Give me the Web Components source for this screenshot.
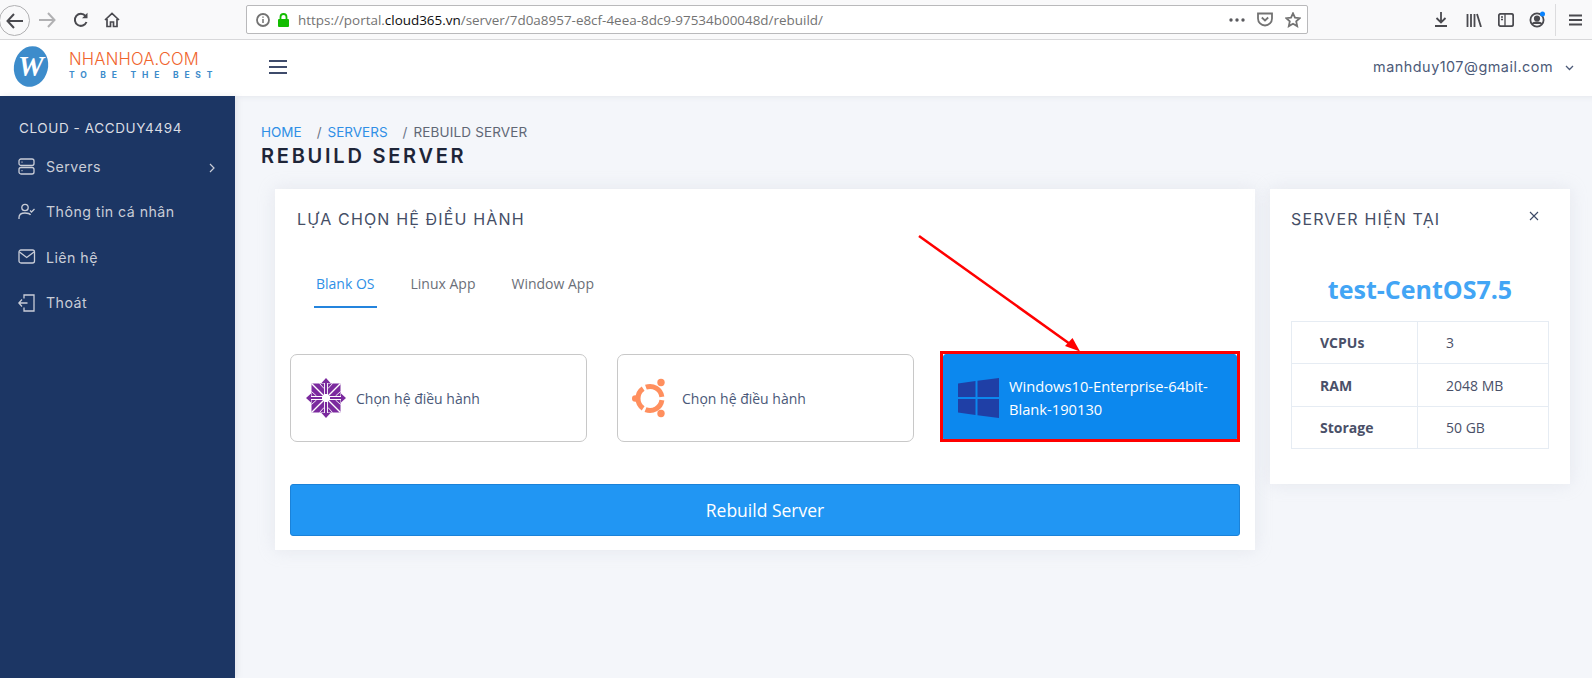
<!DOCTYPE html>
<html>
<head>
<meta charset="utf-8">
<title>Rebuild Server</title>
<style>
    html, body { margin: 0; height: 100%; }
    body { width: 1592px; height: 678px; overflow: hidden; font-family: "Open Sans", sans-serif; position: relative; }
    app-shell { height: 100%; }
</style>
</head>
<body>
<app-shell>
    <browser-bar slot="browser"></browser-bar>
    <app-header slot="header"></app-header>
    <side-nav slot="side" title="CLOUD - ACCDUY4494">
        <nav-item icon="server" arrow>Servers</nav-item>
        <nav-item icon="user">Thông tin cá nhân</nav-item>
        <nav-item icon="mail">Liên hệ</nav-item>
        <nav-item icon="exit">Thoát</nav-item>
    </side-nav>
    <page-head slot="main"></page-head>
    <div slot="main" style="display:flex;gap:15px;padding:0 22px 0 40px;align-items:flex-start">
        <os-panel></os-panel>
        <server-info name="test-CentOS7.5"></server-info>
    </div>
</app-shell>
<note-arrow></note-arrow>

<script>
(function () {

    const SANS = '"Open Sans", sans-serif';
    const HEAD = 'Inter, "Liberation Sans", sans-serif';

    function define(name, html, extra) {
        const template = document.createElement('template');
        template.innerHTML = html;
        class El extends HTMLElement {
            constructor() {
                super();
                this.attachShadow({ mode: 'open' });
                this.shadowRoot.appendChild(template.content.cloneNode(true));
            }
            connectedCallback() {
                if (extra) extra.call(this);
            }
        }
        window.customElements.define(name, El);
    }

    define('app-shell', `
        <style>
            :host { display: grid; grid-template-columns: 235px 1fr; grid-template-rows: 40px 56px 1fr; background: #f4f6fa; }
            .top { grid-column: 1 / 3; }
            .main { min-width: 0; box-shadow: inset 0 6px 6px -6px #dfe2e8; }
        </style>
        <div class="top"><slot name="browser"></slot></div>
        <div class="top"><slot name="header"></slot></div>
        <slot name="side"></slot>
        <div class="main"><slot name="main"></slot></div>`);

    define('browser-bar', `
        <style>
            :host { display: flex; align-items: center; height: 39px; background: #f9f9fa; border-bottom: 1px solid #d8d8da; color: #4a4a4f; }
            svg { display: block; fill: none; stroke: currentColor; stroke-width: 1.8; }
            .back { width: 31px; height: 31px; margin: 2px 0 0 -1px; border: 1px solid #b1b1b3; border-radius: 50%; display: flex; align-items: center; justify-content: center; flex: none; box-sizing: border-box; }
            .btn { margin-top: 1px; flex: none; }
            .url { width: 1062px; height: 29px; margin: 0 0 0 126px; box-sizing: border-box; background: #fff; border: 1px solid #b9b9bb; border-radius: 2px; display: flex; align-items: center; padding: 0 6px 0 9px; font: 13.45px ${SANS}; color: #737373; white-space: nowrap; flex: none; }
            .url b { font-weight: 400; color: #0c0c0d; }
            .url span.t { margin-left: 8px; }
            .fill { flex: 1; }
            .right { display: flex; align-items: center; margin-left: auto; }
            .sep { width: 1px; height: 32px; background: #dcdcde; margin: 0 13px 0 9px; }
            .dots circle { fill: #5a5a5e; stroke: none; }
        </style>
        <div class="back"><svg width="18" height="16" viewBox="0 0 18 16"><path d="M8 1 1.5 8 8 15M2 8h15" stroke-width="2"/></svg></div>
        <svg class="btn" style="margin-left:8px;color:#b1b1b3" width="18" height="16" viewBox="0 0 18 16"><path d="M10 1l6.5 7-6.5 7M16 8H1" stroke-width="2"/></svg>
        <svg class="btn" style="margin-left:17px" width="16" height="16" viewBox="0 0 16 16"><path d="M13.5 10a6 6 0 1 1-1-6" stroke-width="2"/><path d="M14.5 .8v5.4H9z" fill="currentColor" stroke="none"/></svg>
        <svg class="btn" style="margin-left:15px" width="16" height="16" viewBox="0 0 16 16"><path d="M1 8 8 1.5 15 8M3 7v7.5h3.5V10h3v4.5H13V7" stroke-width="1.7"/></svg>
        <div class="url">
            <svg width="14" height="14" viewBox="0 0 14 14" stroke-width="1.2"><circle cx="7" cy="7" r="6"/><path d="M7 6v4M7 3.5v1.3" stroke-width="1.5"/></svg>
            <svg style="margin-left:7px" width="13" height="14" viewBox="0 0 13 14"><path d="M3.5 6V4a3 3 0 0 1 6 0v2" stroke="#12bc00" stroke-width="1.8"/><rect x="1" y="6" width="11" height="8" rx="1" fill="#12bc00" stroke="none"/></svg>
            <span class="t">https://portal.<b>cloud365.vn</b>/server/7d0a8957-e8cf-4eea-8dc9-97534b00048d/rebuild/</span>
            <span class="fill"></span>
            <svg class="dots" width="16" height="4" viewBox="0 0 16 4"><circle cx="2" cy="2" r="1.7"/><circle cx="8" cy="2" r="1.7"/><circle cx="14" cy="2" r="1.7"/></svg>
            <svg style="margin-left:12px" width="16" height="15" viewBox="0 0 16 15" stroke-width="1.6"><path d="M1 1.5h14v5a7 7 0 0 1-14 0zM4.8 5.5 8 8.5l3.2-3"/></svg>
            <svg style="margin-left:12px" width="16" height="16" viewBox="0 0 16 16" stroke-width="1.6"><path d="M8 1.3l2 4.4 4.7.5-3.5 3.2 1 4.7L8 11.7l-4.2 2.4 1-4.7L1.3 6.2 6 5.7z"/></svg>
        </div>
        <div class="right">
            <svg width="14" height="15" viewBox="0 0 14 15"><path d="M7 0v10M2.500 6 7 10.500 11.500 6M1 14h12" stroke-width="1.8"/></svg>
            <svg style="margin-left:18px" width="16" height="14" viewBox="0 0 16 14" stroke-width="1.6"><path d="M1.500 1v13M5 1v13M8.500 1v13M11 1l4 13"/></svg>
            <svg style="margin-left:16px" width="16" height="14" viewBox="0 0 16 14" stroke-width="1.6"><rect x=".8" y=".8" width="14.4" height="12.4" rx="2"/><path d="M7 1v12M3 4h2M3 6.500h2" stroke-width="1.3"/></svg>
            <svg style="margin-left:15px" width="17" height="17" viewBox="0 0 17 17" stroke-width="1.4"><circle cx="8" cy="9" r="6.600"/><circle cx="8" cy="7.500" r="2.200" fill="currentColor"/><path d="M3.500 13c1-2.300 8-2.300 9 0" fill="currentColor"/><circle cx="13.500" cy="3" r="2.500" fill="#0a84ff" stroke="none"/></svg>
            <span class="sep"></span>
            <svg style="margin-right:10px" width="13" height="12" viewBox="0 0 13 12" stroke-width="1.8"><path d="M0 1.500h13M0 6h13M0 10.500h13"/></svg>
        </div>`);

    define('app-header', `
        <style>
            :host { display: flex; align-items: center; height: 56px; box-sizing: border-box; padding-bottom: 2px; background: #fff; color: #3e4b6b; }
            .ball { width: 34px; height: 41px; margin: -2px 0 0 14px; border-radius: 50%; background: #3d8ccb; color: #fff; display: flex; align-items: center; justify-content: center; font: italic 700 29px "Liberation Serif", serif; flex: none; transform: rotate(14deg); }
            .ball span { transform: rotate(-14deg); }
            .brand { margin: -3px 0 0 21px; width: 145px; flex: none; }
            .name { font: 300 16.6px/17px ${HEAD}; color: #f0642d; white-space: nowrap; letter-spacing: .2px; }
            .slogan { font: 700 8.5px/10px ${HEAD}; color: #3d8ccb; letter-spacing: 5.8px; white-space: nowrap; margin-top: 2px; }
            .burger { width: 18px; margin-left: 55px; border-top: 2px solid #3e4b6b; border-bottom: 2px solid #3e4b6b; height: 10px; }
            .burger::after { content: ""; display: block; height: 2px; margin-top: 4px; background: #3e4b6b; }
            .user { margin: -1px 0 0 auto; font: 400 14.4px ${HEAD}; color: #4c5a78; letter-spacing: .5px; }
            svg { margin: 2px 18px 0 12px; }
        </style>
        <div class="ball"><span>W</span></div>
        <div class="brand"><div class="name">NHANHOA.COM</div><div class="slogan">TO BE THE BEST</div></div>
        <div class="burger"></div>
        <span class="user">manhduy107@gmail.com</span>
        <svg width="9" height="6" viewBox="0 0 9 6" fill="none" stroke="#4c5a78" stroke-width="1.3"><path d="M1 1l3.5 3.500L8 1"/></svg>`);

    define('side-nav', `
        <style>
            :host { display: block; background: #1c3664; color: #cfd3dc; min-height: 100%; box-shadow: 2px 0 6px rgba(120,130,150,.15); }
            .t { padding: 24px 0 0 19px; height: 24px; font: 400 13.5px/17px ${HEAD}; letter-spacing: .6px; color: #dadde3; white-space: nowrap; }
        </style>
        <div class="t"></div>
        <div><slot></slot></div>`, function () {
            this.shadowRoot.querySelector('.t').textContent = this.getAttribute('title');
        });

    const NAV_ICONS = {
        server: '<rect x="1" y="1" width="15" height="6.500" rx="2"/><rect x="1" y="9.500" width="15" height="6.500" rx="2"/><path d="M3.500 4.200h1M3.500 12.700h1"/>',
        user: '<circle cx="7" cy="4.500" r="3.200"/><path d="M1 16v-1.500C1 11.500 3.500 10 7 10s5 1 5.500 2M12 7.500l1.500 1.500 3-3"/>',
        mail: '<rect x="1" y="2" width="15.500" height="13" rx="2"/><path d="M1.500 4 8.700 9.500 16 4"/>',
        exit: '<path d="M6 4.500V1h10v16H6v-3.500M9.500 9H.8M4 5.500.8 9 4 12.500"/>'
    };

    define('nav-item', `
        <style>
            :host { display: flex; align-items: center; height: 45.3px; padding-left: 18px; font: 400 14.2px ${HEAD}; color: #c9cdd7; letter-spacing: .45px; position: relative; }
            .ic { width: 18px; height: 18px; fill: none; stroke: currentColor; stroke-width: 1.3; flex: none; margin-right: 10px; }
            .chev { position: absolute; right: 20px; top: 50%; margin-top: -4px; }
        </style>
        <svg class="ic" viewBox="0 0 18 18"></svg>
        <slot></slot>`, function () {
            this.shadowRoot.querySelector('.ic').innerHTML = NAV_ICONS[this.getAttribute('icon')];
            if (this.hasAttribute('arrow')) {
                const s = document.createElement('span');
                s.className = 'chev';
                s.innerHTML = '<svg width="6" height="10" viewBox="0 0 6 10" fill="none" stroke="#c9cdd7" stroke-width="1.2" style="display:block"><path d="M1 1l4 4-4 4"/></svg>';
                this.shadowRoot.appendChild(s);
            }
        });

    define('page-head', `
        <style>
            :host { display: block; padding: 28px 0 0 26px; height: 93px; box-sizing: border-box; }
            .crumbs { font: 400 13.5px/16px ${HEAD}; color: #2f8fe6; display: flex; white-space: nowrap; }
            .crumbs i { font-style: normal; color: #6a7285; margin: 0 6px 0 15px; }
            .crumbs .now { color: #5f6675; letter-spacing: .15px; }
            h1 { margin: 4px 0 0; font: 600 20px/24px ${HEAD}; letter-spacing: 2.75px; color: #1e2538; }
        </style>
        <div class="crumbs"><span>HOME</span><i>/</i><span>SERVERS</span><i>/</i><span class="now">REBUILD SERVER</span></div>
        <h1>REBUILD SERVER</h1>`);

    define('os-tabs', `
        <style>
            :host { display: flex; padding-left: 24px; font: 400 14px ${SANS}; color: #6b6f78; }
            span { display: block; padding: 0 2px; height: 45px; line-height: 42px; margin-right: 32px; box-sizing: border-box; }
            .on { color: #2f8fe6; border-bottom: 2px solid #2484dd; }
        </style>
        <span class="on">Blank OS</span><span>Linux App</span><span>Window App</span>`);

    const OS_ICONS = {
        centos: `<svg viewBox="-20 -20 40 40" width="40" height="40">
            <rect x="-14.500" y="-14.500" width="29" height="29" fill="#7b2a9e"/>
            <g stroke="#fff" fill="none"><path d="M-14.500-14.500 14.500 14.500M14.500-14.500-14.500 14.500" stroke-width="1.400"/><path d="M0-15V15M-15 0H15" stroke-width="4"/><path d="M-6.500-14.500-2-9.500M6.500-14.500 2-9.500M-6.500 14.500-2 9.500M6.500 14.500 2 9.500M-14.500-6.500-9.500-2M14.500-6.500 9.500-2M-14.500 6.500-9.500 2M14.500 6.500 9.500 2" stroke-width=".9"/></g>
            <circle r="3.500" fill="#fff"/>
            <g fill="#7b2a9e"><path d="M0-20l4.500 5H1.100V-4H-1.100V-15H-4.500zM0 20l4.500-5H1.100V4H-1.100V15H-4.500zM-20 0l5-4.500V-1.100H-4V1.100H-15V4.500zM20 0l-5-4.500V-1.100H4V1.100H15V4.500z"/></g></svg>`,
        ubuntu: `<svg viewBox="0 0 38 40" width="38" height="40" style="margin:0 2px 0 -1px"><g fill="none" stroke="#ff8f5e" stroke-width="5"><path d="M13.900 9.220A12 12 0 0 1 29.880 18.830"/><path d="M29.880 22.170A12 12 0 0 1 13.500 31.630"/><path d="M11.120 30.330A12 12 0 0 1 11.120 10.670"/></g><g fill="#ff8f5e"><circle cx="29" cy="4.500" r="3.700"/><circle cx="3.300" cy="20.500" r="3.300"/><circle cx="29" cy="35.500" r="3.700"/></g></svg>`,
        windows: `<svg viewBox="0 0 41 40" width="41" height="40" fill="#1f3fa6"><path d="M0 5.500 17.500 3v16H0zM19.500 2.700 41 0v19H19.500zM0 21h17.500v16L0 34.500zM19.500 21H41v19l-21.500-2.700z"/></svg>`
    };

    define('os-card', `
        <style>
            :host { display: flex; align-items: center; box-sizing: border-box; width: 297px; height: 88px; border: 1px solid #c8c8c8; border-radius: 7px; padding: 0 0 0 15px; background: #fff; color: #4a5878; font: 400 14px/22px ${SANS}; flex: none; }
            :host([active]) { background: #0c88ee; color: #fff; border-color: #0c88ee; border-radius: 3px; width: 294px; height: 87px; margin-left: -1px; padding-left: 14px; font-size: 14.7px; }
            .i { flex: none; display: flex; margin-right: 10px; }
            .txt { margin-top: 2px; }
            :host([active]) .txt { margin-top: 0; line-height: 23px; }
        </style>
        <span class="i"></span><span class="txt"><slot></slot></span>`, function () {
            this.shadowRoot.querySelector('.i').innerHTML = OS_ICONS[this.getAttribute('icon')];
        });

    define('os-panel', `
        <style>
            :host { display: block; box-sizing: border-box; width: 980px; height: 361px; background: #fff; box-shadow: 0 0 16px rgba(190,195,210,.28); padding: 0 15px; flex: none; }
            h2 { margin: 0; padding: 19px 0 0 7px; height: 23px; font: 400 16px/22px ${HEAD}; letter-spacing: 1.15px; color: #454e66; }
            os-tabs { margin-top: 32px; }
            .row { display: flex; gap: 30px; margin-top: 46px; }
            button { display: block; width: 950px; height: 52px; margin-top: 42px; border: 1px solid #1b82d8; border-radius: 3px; background: #2196f3; color: #fff; font: 400 17.5px ${SANS}; padding: 0; }
        </style>
        <h2>LỰA CHỌN HỆ ĐIỀU HÀNH</h2>
        <os-tabs></os-tabs>
        <div class="row">
            <os-card icon="centos">Chọn hệ điều hành</os-card>
            <os-card icon="ubuntu">Chọn hệ điều hành</os-card>
            <os-card icon="windows" active>Windows10-Enterprise-64bit-Blank-190130</os-card>
        </div>
        <button>Rebuild Server</button>`);

    define('server-info', `
        <style>
            :host { display: block; box-sizing: border-box; width: 300px; height: 295px; background: #fff; box-shadow: 0 0 16px rgba(190,195,210,.28); padding: 19px 21px 0; flex: none; }
            .top { display: flex; justify-content: space-between; height: 22px; }
            h2 { margin: 0; font: 400 16px/22px ${HEAD}; letter-spacing: 1.15px; color: #454e66; }
            svg { margin: 3px 10px 0 0; }
            .name { margin: 43px 0 0; text-align: center; font: 700 25px/32px ${SANS}; color: #42a5f5; }
            table { margin-top: 16px; width: 258px; border-collapse: collapse; font: 400 14px ${SANS}; color: #4a5068; table-layout: fixed; }
            td { border: 1px solid #e6ecf3; height: 42.4px; padding: 0 0 0 28px; box-sizing: border-box; }
            td:first-child { font-weight: 700; width: 126px; }
        </style>
        <div class="top"><h2>SERVER HIỆN TẠI</h2><svg width="10" height="10" viewBox="0 0 10 10" fill="none" stroke="#3c4a66" stroke-width="1.1"><path d="M1 1l8 8M9 1l-8 8"/></svg></div>
        <div class="name"></div>
        <table>
            <tr><td>VCPUs</td><td>3</td></tr>
            <tr><td>RAM</td><td>2048 MB</td></tr>
            <tr><td>Storage</td><td>50 GB</td></tr>
        </table>`, function () {
            this.shadowRoot.querySelector('.name').textContent = this.getAttribute('name');
        });

    // red annotation drawn over the screenshot
    define('note-arrow', `
        <style>
            :host { display: block; position: absolute; left: 0; top: 0; width: 1592px; height: 678px; pointer-events: none; }
            svg { display: block; }
        </style>
        <svg width="1592" height="678" viewBox="0 0 1592 678" fill="none">
            <path d="M919 236 1070 344" stroke="#f00" stroke-width="2.5"/>
            <path d="M1080 351.500 1065 346 1072.500 338z" fill="#f00"/>
            <rect x="941.500" y="352.500" width="297" height="88" stroke="#f00" stroke-width="3"/>
        </svg>`);

})();
</script>
</body>
</html>
